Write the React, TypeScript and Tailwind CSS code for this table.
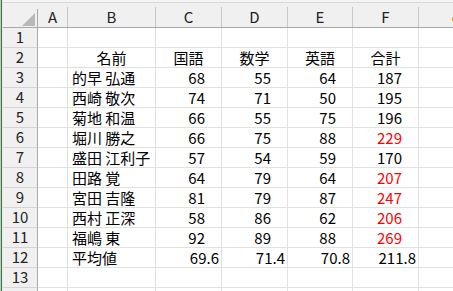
import React from "react";

const FONT = '"Noto Sans CJK JP", "Noto Sans", sans-serif';

type Row = { name: string; vals: (string | number)[]; avg?: boolean };

const rows: Row[] = [
  { name: "的早 弘通", vals: [68, 55, 64, 187] },
  { name: "西崎 敬次", vals: [74, 71, 50, 195] },
  { name: "菊地 和温", vals: [66, 55, 75, 196] },
  { name: "堀川 勝之", vals: [66, 75, 88, 229] },
  { name: "盛田 江利子", vals: [57, 54, 59, 170] },
  { name: "田路 覚", vals: [64, 79, 64, 207] },
  { name: "宮田 吉隆", vals: [81, 79, 87, 247] },
  { name: "西村 正深", vals: [58, 86, 62, 206] },
  { name: "福嶋 東", vals: [92, 89, 88, 269] },
  { name: "平均値", vals: ["69.6", "71.4", "70.8", "211.8"], avg: true },
];

const valW = ["w-[66px]", "w-[66px]", "w-[65px]", "w-[66px]"];

function RowHead({ n }: { n?: number }) {
  return (
    <div className="w-[35px] h-[20px] shrink-0 bg-[#f0f0f0] border-r border-r-[#a8a8a8] border-b border-b-[#d4d4d4] text-center text-[15px] leading-[17px] text-[#222]">
      {n}
    </div>
  );
}

function Blank({ w }: { w: string }) {
  return <div className={`${w} h-[20px] shrink-0 border-r border-b border-[#e1e1e1]`} />;
}

function EmptyRow({ n }: { n?: number }) {
  return (
    <div className="flex">
      <RowHead n={n} />
      <Blank w="w-[30px]" />
      <Blank w="w-[88px]" />
      <Blank w="w-[66px]" />
      <Blank w="w-[66px]" />
      <Blank w="w-[65px]" />
      <Blank w="w-[66px]" />
      <Blank w="w-[66px]" />
    </div>
  );
}

export default function App() {
  return (
    <div
      className="w-[453px] h-[291px] overflow-hidden bg-white flex text-black"
      style={{ fontFamily: FONT }}
    >
      <div className="w-[1px] h-full bg-[#c6c6c6] shrink-0" />
      <div className="w-[1px] h-full bg-[#2f7d3a] shrink-0" />
      <div className="w-[1px] h-full bg-[#e9e9e9] shrink-0" />
      <div className="flex-1 flex flex-col min-w-0">
        {/* column header */}
        <div className="h-[3px] bg-[#f4f4f4] border-b border-[#d8d8d8] shrink-0" />
        <div className="h-[25px] flex bg-[#f0f0f0] border-b border-[#a8a8a8] shrink-0 relative">
          <div className="w-[35px] shrink-0 flex flex-col">
            <div className="h-[6px]" />
            <div className="flex-1 border-r border-[#a8a8a8] relative">
              <svg className="absolute left-[19px] top-[4px]" width="13" height="13" viewBox="0 0 13 13">
                <polygon points="13,0 13,13 0,13" fill="#b8b8b8" />
              </svg>
            </div>
          </div>
          {[
            ["A", "w-[30px]"],
            ["B", "w-[88px]"],
            ["C", "w-[66px]"],
            ["D", "w-[66px]"],
            ["E", "w-[65px]"],
            ["F", "w-[66px]"],
            ["G", "w-[66px]"],
          ].map(([l, w]) => (
            <div key={l} className={`${w} shrink-0 flex flex-col`}>
              <div className="h-[6px]" />
              <div className="flex-1 border-r border-[#c8c8c8] text-center text-[15px] leading-[20px] -mt-[1px] text-[#222]">
                {l === "G" ? "" : l}
              </div>
            </div>
          ))}
          <div className="absolute left-[449px] top-[14px] w-[1px] h-[4px] bg-[#f2a33a]" />
        </div>

        <EmptyRow n={1} />

        {/* row 2 headers */}
        <div className="flex">
          <RowHead n={2} />
          <Blank w="w-[30px]" />
          {[
            ["名前", "w-[88px]"],
            ["国語", "w-[66px]"],
            ["数学", "w-[66px]"],
            ["英語", "w-[65px]"],
            ["合計", "w-[66px]"],
          ].map(([t, w]) => (
            <div
              key={t}
              className={`${w} h-[20px] shrink-0 border-r border-b border-[#e1e1e1] text-center text-[15px] leading-[20px] whitespace-nowrap`}
            >
              {t}
            </div>
          ))}
          <Blank w="w-[66px]" />
        </div>

        {rows.map((r, i) => (
          <div key={i} className="flex">
            <RowHead n={i + 3} />
            <Blank w="w-[30px]" />
            <div className="w-[88px] h-[20px] shrink-0 border-r border-b border-[#e1e1e1] pl-[4px] text-[15px] leading-[20px] whitespace-nowrap overflow-hidden">
              {r.name}
            </div>
            {r.vals.map((v, j) => {
              const red = j === 3 && typeof v === "number" && v > 200;
              return (
                <div
                  key={j}
                  className={`${valW[j]} h-[20px] shrink-0 border-r border-b border-[#e1e1e1] text-right text-[15px] leading-[20px] whitespace-nowrap ${
                    r.avg ? "pr-[2px]" : "pr-[16px]"
                  } ${red ? "text-[#ff0000]" : "text-black"}`}
                >
                  {v}
                </div>
              );
            })}
            <Blank w="w-[66px]" />
          </div>
        ))}

        <EmptyRow n={13} />
        <EmptyRow />
      </div>
    </div>
  );
}
